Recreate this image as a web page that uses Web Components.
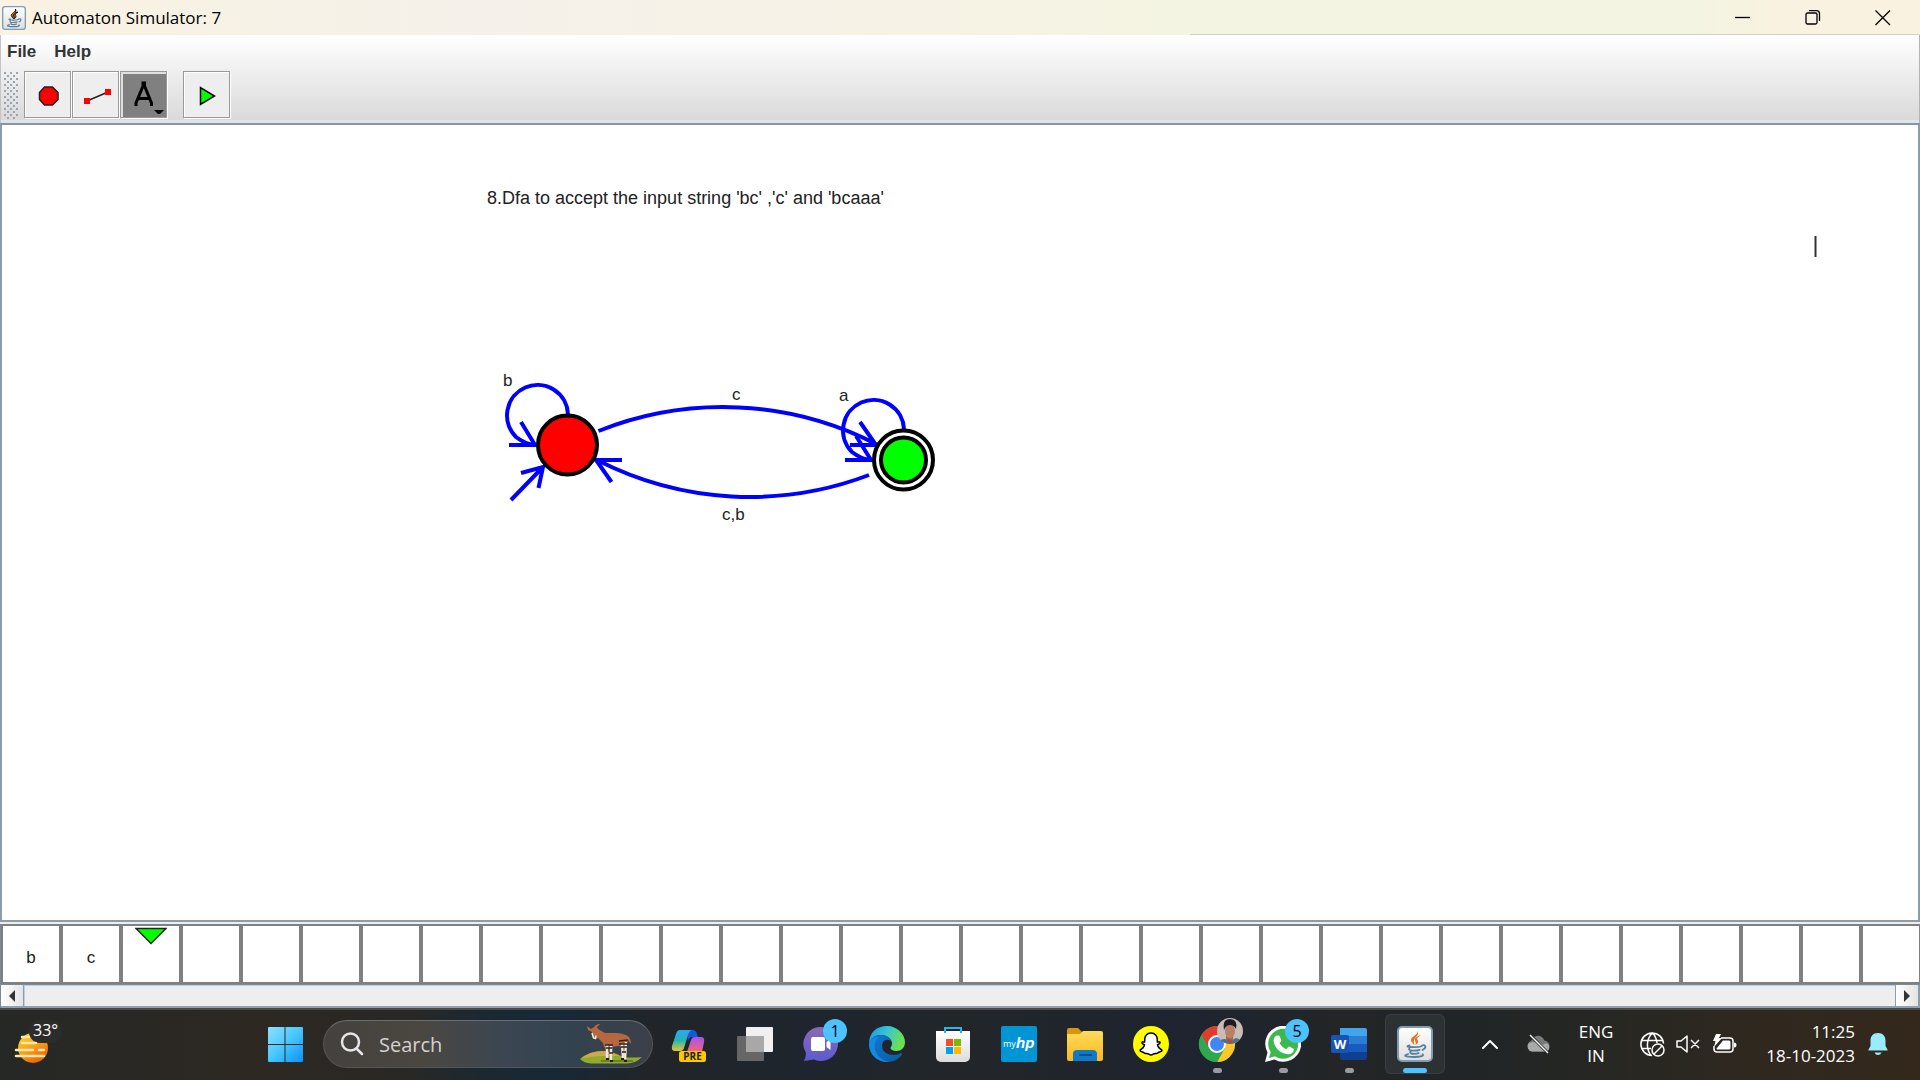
<!DOCTYPE html>
<html lang="en">
<head>
<meta charset="utf-8">
<title>Automaton Simulator: 7</title>
<style>
  html, body { margin: 0; height: 100%; overflow: hidden; background: #eee; }
  body { font-family: "Open Sans", "Noto Sans", sans-serif; }
</style>
</head>
<body>
<desk-screen>
  <app-window>
    <title-bar slot="title">Automaton Simulator: 7</title-bar>
    <menu-bar slot="chrome"></menu-bar>
    <tool-bar slot="chrome"></tool-bar>
    <automaton-canvas slot="canvas"></automaton-canvas>
    <input-tape slot="tape" symbols="b,c" head="2" cells="33"></input-tape>
    <tape-scroll slot="tape"></tape-scroll>
  </app-window>
  <task-bar slot="taskbar"></task-bar>
</desk-screen>

<template id="java-cup">
  <svg viewBox="0 0 36 36" width="100%" height="100%">
    <defs>
      <linearGradient id="tile" x1="0" y1="0" x2="0" y2="1"><stop offset="0" stop-color="#fff"/><stop offset="1" stop-color="#dedede"/></linearGradient>
    </defs>
    <rect x="1" y="1" width="34" height="34" rx="4" fill="url(#tile)" stroke="#7f9db5" stroke-width="2"/>
    <path d="M20 4.500c2.500 4-7 6.500-6 10 .4 1.800 2 3 3.200 4.500.3-2-1-3.200-.2-5C18 11 23 9 20 4.500z" fill="#e76f1c"/>
    <path d="M24 9c-4 1-7 3.500-6 5.700.6 1.300 1.500 2 .3 4.300 3.500-2 3-3.800 2-5.300-.9-1.500 1.200-3.200 3.700-4.700z" fill="#e76f1c"/>
    <g fill="none" stroke="#54819f" stroke-width="1.800" stroke-linecap="round">
      <path d="M12.500 19.300c-4 1-2 2 5 1.900 3.500 0 6-.5 7-1"/>
      <path d="M12.500 22.300c-1.500 2 1.500 2.500 5 2.400 2.500 0 4-.4 5-.8"/>
      <path d="M13.500 25.800c-1 1.500 1 2 4 2 2 0 3.300-.3 4.200-.8"/>
      <path d="M25 19.500c4-1.500 4.800 2.500.5 4.500"/>
      <path d="M11 28c-5 1.500-3.500 3 6 3 7 0 10.500-1.300 8.500-2.700"/>
    </g>
  </svg>
</template>

<script>
  const javaCup = () => document.getElementById('java-cup').innerHTML;

  class Part extends HTMLElement {
    connectedCallback() {
      if (this.shadowRoot) return;
      this.attachShadow({ mode: 'open' }).innerHTML =
        `<style>:host,*{box-sizing:border-box}button{appearance:none;border:0;padding:0;margin:0;background:none;color:inherit;font:inherit}svg{display:block}${this.css()}</style>${this.html()}`;
    }
    css() { return ''; }
    html() { return '<slot></slot>'; }
  }

  customElements.define('desk-screen', class extends Part {
    css() { return ':host{display:flex;flex-direction:column;height:100vh}.app{flex:1;min-height:0;display:flex}'; }
    html() { return '<div class="app"><slot></slot></div><slot name="taskbar"></slot>'; }
  });

  customElements.define('app-window', class extends Part {
    css() { return `
      :host{display:flex;flex-direction:column;flex:1;min-width:0}
      .chrome{background:linear-gradient(#fff,#dadada 84px,#dadada 85px,#e4e4e4 85px);border-left:1px solid #c4c4c4;border-right:1px solid #b4b4b4;height:88px}
      .view{flex:1;min-height:0;display:flex;border:2px solid #8c9cac;border-top-color:#8296aa;margin-bottom:2px;background:#fff}
      .tape{border-left:1px solid #7c8894;overflow:hidden}`; }
    html() { return `<slot name="title"></slot>
      <div class="chrome"><slot name="chrome"></slot></div>
      <div class="view"><slot name="canvas"></slot></div>
      <div class="tape"><slot name="tape"></slot></div>`; }
  });

  customElements.define('title-bar', class extends Part {
    css() { return `
      :host{display:flex;align-items:center;height:35px;background:linear-gradient(90deg,#d0d0c4,#d0d0c4) 100% 100%/38% 1px no-repeat,linear-gradient(90deg,#faf2e2 0,#f7f2e4 8%,#f5f1ea 25%,#f7f2e6 45%,#f4f4e2 62%,#f3f4e2 88%,#faf2e0 93%);color:#000;font-size:17px}
      .icon{width:24px;height:24px;margin:0 6px 0 2px}
      .name{flex:1;line-height:34px}
      .controls{display:flex;padding-right:2px}
      .controls button{width:70px;height:34px;display:grid;place-items:center}
      svg{fill:none;stroke:#000;stroke-width:1.300}`; }
    html() { return `<span class="icon">${javaCup()}</span><span class="name"><slot></slot></span>
      <span class="controls">
        <button aria-label="Minimize"><svg width="16" height="16"><path d="M0 7.500h15"/></svg></button>
        <button aria-label="Restore"><svg width="16" height="16"><rect x="1" y="3" width="11" height="11" rx="1.500"/><path d="M4 .7h7.500a3 3 0 0 1 3 3V11"/></svg></button>
        <button aria-label="Close"><svg width="16" height="16"><path d="M.5 .5l14.500 14.500M15 .5L.5 15"/></svg></button>
      </span>`; }
  });

  customElements.define('menu-bar', class extends Part {
    css() { return `
      :host{display:flex;gap:18px;padding:7px 6px 0;height:35px;font:bold 17px/20px "Liberation Sans",Arial,sans-serif;color:#333}
      button{height:20px}`; }
    html() { return '<button>File</button><button>Help</button>'; }
  });

  customElements.define('tool-bar', class extends Part {
    css() { return `
      :host{display:flex;align-items:flex-start;gap:1px;padding:1px 2px 0}
      .grip{width:16px;height:48px;margin-right:4px;background:radial-gradient(circle at 2px 2px,#9aa4ae 1px,transparent 1.500px) 0 0/6px 6px,radial-gradient(circle at 5px 5px,#9aa4ae 1px,transparent 1.500px) 0 0/6px 6px}
      button{width:47px;height:47px;border:1px solid #999;box-shadow:inset 1px 1px #fff,1px 1px #fff;background:#eee;display:grid;place-items:center}
      button.on{background:#808080;border:1px solid #999;box-shadow:inset 2px 2px #e0e0e0,1px 1px #fff}
      button.run{margin-left:15px}`; }
    html() { return `<span class="grip"></span>
      <button aria-label="State"><svg width="45" height="45"><path d="M19.500 15h8l5.500 5.500v7l-5.500 5.500h-8l-5-5.500v-7z" fill="#f00" stroke="#222" stroke-width="1.500"/></svg></button>
      <button aria-label="Transition"><svg width="45" height="45"><path d="M14 29l21-9" stroke="#222" stroke-width="1.500"/><path d="M11 26h6v6h-6zM32 17h6v6h-6z" fill="#f00"/></svg></button>
      <button class="on" aria-label="Label" aria-pressed="true"><svg width="45" height="45" fill="none"><path d="M15 34v-3l7-17v-3h1.500v3l7 17v3M18 26.500h10" stroke="#000" stroke-width="3"/><path d="M33 38h10l-4 4h-2z" fill="#000"/></svg></button>
      <button class="run" aria-label="Run"><svg width="45" height="45"><path d="M16.500 15.500v17l14-8.500z" fill="#0f0" stroke="#000" stroke-width="1.500"/></svg></button>`; }
  });

  customElements.define('automaton-canvas', class extends Part {
    css() { return `
      :host{display:block;flex:1;background:#fff;font:17px "Liberation Sans",Arial,sans-serif;overflow:hidden}
      .edges{fill:none;stroke:#00f;stroke-width:4}
      .states{stroke:#000;stroke-width:4}
      text{fill:#222}.title{font-size:18px}`; }
    html() { return `<svg width="100%" height="100%"><g transform="translate(-2 -125)">
      <g class="edges">
        <path d="M568 414A30.500 30.500 0 1 0 516 437Q525 444 535 445M509 445h26l-14-23"/>
        <path d="M904 429A30.500 30.500 0 1 0 852 452Q861 459 870 460M845 460h26l-15-24"/>
        <path d="M598.500 431A335 335 0 0 1 876 444M850 445h26l-16-23"/>
        <path d="M869 475A335 335 0 0 1 597 460M622 460h-26l15.500 22"/>
        <path d="M511 500l32-33M521 473l22-6-4.500 21"/>
      </g>
      <g class="states">
        <circle cx="567.500" cy="445" r="29.500" fill="#f00"/>
        <circle cx="903.500" cy="460" r="29.500" fill="#fff"/>
        <circle cx="903.500" cy="460" r="22.500" fill="#0f0"/>
      </g>
      <text class="title" x="487" y="204">8.Dfa to accept the input string 'bc' ,'c' and 'bcaaa'</text>
      <text x="503" y="386">b</text><text x="732" y="400">c</text>
      <text x="839" y="401">a</text><text x="722" y="520">c,b</text>
      <path d="M1815.500 236v21" stroke="#333" stroke-width="2"/>
    </g></svg>`; }
  });

  customElements.define('input-tape', class extends Part {
    css() { return `
      :host{display:flex;height:60px;overflow:hidden;background:#fff;font:17px/20px "Liberation Sans",Arial,sans-serif;color:#222}
      .cell{flex:none;width:60px;height:60px;border:2px solid #808080;display:flex;justify-content:center;padding-top:22px}
      .cell.head{padding-top:1px}`; }
    html() {
      const s = this.getAttribute('symbols').split(','), head = +this.getAttribute('head');
      return Array.from({ length: +this.getAttribute('cells') }, (_, i) => i === head
        ? '<span class="cell head"><svg width="32" height="18"><path d="M1 1.500h30L16 16.500z" fill="#0f0" stroke="#222" stroke-width="1.500"/></svg></span>'
        : `<span class="cell">${s[i] || ''}</span>`).join('');
    }
  });

  customElements.define('tape-scroll', class extends Part {
    css() { return `
      :host{display:flex;height:24px;border-top:1px solid #7a8a99;border-bottom:2px solid #8fa0b2}
      button{width:23px;background:linear-gradient(90deg,#fff,#e4e4e4);border-right:1px solid #8c9cac;display:grid;place-items:center}
      .next{border-left:1px solid #8c9cac;width:25px;border-right:2px solid #8c9cac}
      .track{flex:1;background:#eee;border-top:1px solid #b8cfe5;border-left:1px solid #b8cfe5}`; }
    html() { return `<button aria-label="Scroll left"><svg width="8" height="12"><path d="M7 0v12L1 6z" fill="#333"/></svg></button>
      <span class="track"></span>
      <button class="next" aria-label="Scroll right"><svg width="8" height="12"><path d="M1 0v12l6-6z" fill="#333"/></svg></button>`; }
  });

  customElements.define('task-item', class extends Part {
    css() { return `
      :host{display:block;flex:none}
      button{position:relative;width:60px;height:60px;display:grid;place-items:center;border-radius:6px}
      :host([active]) button{background:#2e3133;box-shadow:inset 0 0 0 1px #3b3d3f}
      .pic{width:36px;height:36px}
      .badge{position:absolute;left:32px;top:5px;width:24px;height:24px;border-radius:50%;background:#4cc2ff;color:#000;font-size:16px;line-height:24px;text-align:center}
      .mark{position:absolute;left:26px;bottom:1px;width:9px;height:5px;border-radius:3px;background:#9a9b9c}
      :host([active]) .mark{left:18px;width:24px;background:#4cc2ff}`; }
    html() {
      const b = this.getAttribute('badge');
      return `<button aria-label="${this.getAttribute('name')}"><span class="pic"><slot></slot></span>${b ? `<span class="badge">${b}</span>` : ''}${this.hasAttribute('running') ? '<span class="mark"></span>' : ''}</button>`;
    }
  });

  customElements.define('search-box', class extends Part {
    css() { return `
      :host{display:flex;flex:none;align-items:center;width:330px;height:48px;margin-left:2px;border:1px solid #55565a;border-top-color:#6a6d72;border-radius:24px;overflow:hidden;background:linear-gradient(90deg,#45423d,#4a4741 30%,#3b4652 55%,#33424f 75%,#3b4048)}
      svg{flex:none}.lens{margin-left:16px}
      input{flex:1;min-width:0;margin:0 0 0 15px;padding:0;border:0;outline:0;background:none;color:#d8d8d6;font:20px "Open Sans","Noto Sans",sans-serif}
      input::placeholder{color:#d3d2cf;opacity:1}
      .okapi{margin-right:9px}`; }
    html() { return `<svg class="lens" width="24" height="24" fill="none" stroke="#e4e6ea" stroke-width="2.500" stroke-linecap="round"><circle cx="10.500" cy="10" r="8.500"/><path d="M16.500 16.500l5.500 5.500"/></svg>
      <input type="search" aria-label="Search" placeholder="Search">
      <svg class="okapi" width="64" height="40">
        <path d="M1 35Q10 27 24 27Q36 28 44 33Q54 34 63 33Q57 39 48 39.500H12Q5 39 1 35z" fill="#93ab2c"/>
        <path d="M3 34Q12 27 24 27Q34 28 40 32Q22 31 3 34z" fill="#d0a84c"/>
        <path d="M22 37h32" stroke="#5c7a20" stroke-width="1.500"/>
        <path d="M12 5L8 2l1 4 4 2 1 5 2 2 3-1 5 5 1 4q3 2 6 0l9-1 6 2 2-4 1-4 3 4q0-7-5-9-5-2-10-2H26l-7-4-1-2 4-4-5 2-2 2z" fill="#b5683f"/>
        <path d="M13 9l1.500 5 2 .5.500-3" fill="none" stroke="#f2eee8" stroke-width="1.500"/>
        <path d="M28 21v13M32 22v14M43 20l1 14M47 18l-1 17" stroke="#eee5dc" stroke-width="2.500"/>
        <path d="M26 21h8M27 24h6M40 17l9-1M40 20h9M42 23h6M30 29h4M43 28h4" stroke="#30211d" stroke-width="1.500"/>
        <path d="M27 35h3M31 37h3M42 35h3M45 37h3" stroke="#271a18" stroke-width="2"/>
      </svg>`; }
  });

  customElements.define('task-bar', class extends Part {
    css() { return `
      :host{display:flex;flex:none;align-items:center;height:72px;padding-bottom:2px;border-top:2px solid #4a4a47;color:#fff;background:linear-gradient(90deg,#262825 0,#2d2822 13%,#2a2824 21%,#1c2831 25%,#172836 29%,#212529 34%,#1e252e 42%,#222629 50%,#1e2430 62%,#232526 70%,#212527 76%,#262723 83%,#30281f 92%,#33281b 100%)}
      .weather{flex:0 0 240px;padding-left:14px}
      .apps{display:flex;flex:1;align-items:center;gap:6px;padding-left:15px}
      .tray{display:flex;align-items:center;font-size:17px;line-height:24px}
      .tray button{display:block}
      .tray .lang{text-align:center;width:44px;margin:0 22px 0 24px}
      .tray .clock{text-align:right;margin:0 13px 0 16px;width:102px;white-space:nowrap}
      .tray .bell{margin-right:32px}
      .cloud{margin-left:28px}.sound{margin-left:11px}.power{margin-left:12px}
      .tray svg{flex:none}`; }
    html() { return `
      <button class="weather" aria-label="Weather"><svg width="52" height="56" viewBox="0 -6 52 56">
        <defs><linearGradient id="sun" x1="0" y1="0" x2=".6" y2="1"><stop offset="0" stop-color="#ffdc26"/><stop offset=".6" stop-color="#f79a1c"/><stop offset="1" stop-color="#e8650c"/></linearGradient></defs>
        <circle cx="19" cy="26" r="15" fill="url(#sun)"/><rect x="15" y="-2" width="33" height="23" rx="11" fill="#2c2c2a"/>
        <path d="M8 15h7M8 21h14M2 28h17M25 28h5M2 34h28" stroke="#ffe8a8" stroke-width="2.500" stroke-linecap="round"/>
        <text x="19" y="14" fill="#fff" font-size="16" font-family="Open Sans, sans-serif">33°</text></svg></button>
      <div class="apps">
        <task-item name="Start"><svg width="36" height="36"><defs><linearGradient id="w" x1="0" y1="0" x2="1" y2="1"><stop offset="0" stop-color="#8ee0ff"/><stop offset=".5" stop-color="#46c7ff"/><stop offset="1" stop-color="#0a92fa"/></linearGradient></defs><path d="M2 1h15.500v17H1V2a1 1 0 0 1 1-1zM18.500 1H35a1 1 0 0 1 1 1v16H18.500zM1 19h16.500v17H2a1 1 0 0 1-1-1zM18.500 19H36v16a1 1 0 0 1-1 1H18.500z" fill="url(#w)"/></svg></task-item>
        <search-box></search-box>
        <task-item name="Copilot"><svg width="36" height="36">
          <defs><linearGradient id="ca" x1="0" y1="0" x2="0" y2="1"><stop offset="0" stop-color="#2aa8f4"/><stop offset=".5" stop-color="#25b4b4"/><stop offset="1" stop-color="#ecc52c"/></linearGradient>
          <linearGradient id="cb" x1="0" y1="0" x2="0" y2="1"><stop offset="0" stop-color="#a454ee"/><stop offset="1" stop-color="#f8637c"/></linearGradient></defs>
          <path d="M16 4h6q3 0 4 4l1 3h-6q-3 0-4 4z" fill="#1458dc"/>
          <path d="M9 4h12q-3 1-4 5l-4 13q-1 3-4 3H4q-4 0-3-5L5 8q1-4 4-4z" fill="url(#ca)"/>
          <path d="M23 11h7q4 0 3 5l-2 10H16l4-12q1-3 3-3z" fill="url(#cb)"/>
          <rect x="8" y="25" width="27" height="11" rx="2.500" fill="#ffc800"/><text x="21.500" y="34" text-anchor="middle" font-size="10" font-weight="bold" font-family="Open Sans, sans-serif" fill="#221">PRE</text></svg></task-item>
        <task-item name="Task view"><svg width="36" height="36"><rect x="9" y="1" width="27" height="25" rx="1" fill="#f0f0f0"/><rect x="0" y="10" width="27" height="25" rx="1" fill="#666"/><path d="M9 10h18v16H9z" fill="#a8a8a8"/></svg></task-item>
        <task-item name="Chat" badge="1"><svg width="36" height="36"><defs><linearGradient id="ch" x1="0" y1="0" x2="0" y2="1"><stop offset="0" stop-color="#8d68b4"/><stop offset="1" stop-color="#5b5bd0"/></linearGradient></defs><path d="M18 1a17 17 0 1 1-7 32.500L1 35q2-4 2-8A17 17 0 0 1 18 1z" fill="url(#ch)"/><rect x="8" y="11" width="14" height="14" rx="2" fill="#fff"/><path d="M23.500 16l4-3v11l-4-3z" fill="#fff"/></svg></task-item>
        <task-item name="Edge"><svg width="36" height="36">
          <defs><linearGradient id="ea" x1="0" y1="0" x2="1" y2=".3"><stop offset="0" stop-color="#1d90dc"/><stop offset=".5" stop-color="#36c4d8"/><stop offset="1" stop-color="#6be04e"/></linearGradient>
          <linearGradient id="eb" x1="0" y1="0" x2="1" y2="1"><stop offset="0" stop-color="#0f7ad2"/><stop offset="1" stop-color="#0c59a4"/></linearGradient></defs>
          <path d="M0 18C0 6 8 0 18 0s18 8 18 16c0 6-4 9-8.500 9-4 0-6-1.500-6-3 0-1 1.500-1.500 1.500-4.500C23 13 18 9 12 9S1 13 0 18z" fill="url(#ea)"/>
          <path d="M0 18c1-6 6-9 12-9 5 0 9 3 10 6-5-3-9 0-9 5 0 6 6 9 12 9 3 0 5-1 7-2 1 0 1.500.500 1 1.500C30 33 25 36 18 36 8 36 0 28 0 18z" fill="url(#eb)"/>
          <path d="M0 18c1-5 5-7 10-7-5 4-6 11-2 17 3 5 8 7.500 13 8C8 37 0 28 0 18z" fill="#1489e0"/></svg></task-item>
        <task-item name="Store"><svg width="36" height="36"><defs><linearGradient id="st" x1="0" y1="0" x2="0" y2="1"><stop offset="0" stop-color="#fff"/><stop offset="1" stop-color="#dcdcdc"/></linearGradient></defs><path d="M1 5h34v26a5 5 0 0 1-5 5H6a5 5 0 0 1-5-5z" fill="url(#st)"/><path d="M10 7V2h16v5" fill="none" stroke="#2ab4e8" stroke-width="2"/><path d="M11 13h7v7h-7z" fill="#f05022"/><path d="M19 13h7v7h-7z" fill="#7db900"/><path d="M11 21h7v7h-7z" fill="#00a2ee"/><path d="M19 21h7v7h-7z" fill="#ffb800"/></svg></task-item>
        <task-item name="myHP"><svg width="36" height="36"><rect width="36" height="36" rx="2" fill="#0096d6"/><text x="2" y="21" fill="#fff" font-size="9" font-family="Open Sans, sans-serif">my</text><text x="15" y="22" fill="#fff" font-size="15" font-weight="bold" font-style="italic" font-family="Liberation Sans, sans-serif">hp</text></svg></task-item>
        <task-item name="File Explorer"><svg width="36" height="36"><defs><linearGradient id="fo" x1="0" y1="0" x2="0" y2="1"><stop offset="0" stop-color="#ffdb5c"/><stop offset="1" stop-color="#f9b91e"/></linearGradient></defs><path d="M0 4q0-2 2-2h9l4 4h20v6H0z" fill="#d8960c"/><path d="M0 8h13l3-3h18q2 0 2 2v26q0 2-2 2H2q-2 0-2-2z" fill="url(#fo)"/><path d="M6 35v-7q0-4 4-4h16q4 0 4 4v7z" fill="#0f7bc8"/><path d="M12 29h13" stroke="#0a5390" stroke-width="2"/></svg></task-item>
        <task-item name="Snapchat"><svg width="36" height="36"><circle cx="18" cy="18" r="18" fill="#fffc00"/><path d="M18 7c4 0 6.500 3 6.300 7v2c1 .3 2-.8 2.700.2.500 1-1 1.800-2.500 2.500.5 3 2.500 4.500 4.500 5.500 0 1.500-2 1.500-3.500 2-.5 1.500-1 1.400-3 1.200-2-.2-2.500 1.600-4.500 1.600s-2.500-1.800-4.500-1.600c-2 .2-2.500.3-3-1.200-1.500-.5-3.500-.5-3.500-2 2-1 4-2.500 4.500-5.500-1.500-.7-3-1.500-2.500-2.500.7-1 1.700.1 2.700-.2v-2C11.500 10 14 7 18 7z" fill="#fff" stroke="#000" stroke-width="1.500"/></svg></task-item>
        <task-item name="Chrome" running><svg width="36" height="36" overflow="visible"><circle cx="18" cy="18" r="18" fill="#2fa84f"/><path d="M18 18L2.500 9A18 18 0 0 1 33.600 9H18z" fill="#e33b2e"/><path d="M18 9h15.600A18 18 0 0 1 18 36l7.800-13.500z" fill="#fdc727"/><path d="M2.500 9L10.200 22.500 18 18l-4-9z" fill="#e33b2e"/><path d="M2.400 9L10 22.500q3 4.500 8 4.500h5L18 36A18 18 0 0 1 2.400 9z" fill="#2fa84f"/><circle cx="18" cy="18" r="9" fill="#fff"/><circle cx="18" cy="18" r="7" fill="#4285f4"/>
          <clipPath id="face"><circle cx="31" cy="5" r="13"/></clipPath><g clip-path="url(#face)"><path d="M18-8h26v26H18z" fill="#c8bcb6"/><path d="M18 18q2-5 8-5l5 2 6-3q5 1 7 6z" fill="#526e88"/><path d="M27 10h7v4l-3 3-4-3z" fill="#996850"/><ellipse cx="31" cy="5" rx="5" ry="7.500" fill="#b98066"/><path d="M25 4q-2-11 6-11t6 10q-2-4-6-4t-6 5z" fill="#1c1c22"/><path d="M28 13l3 6 2-5z" fill="#b8453d"/></g></svg></task-item>
        <task-item name="WhatsApp" badge="5" running><svg width="36" height="36"><path d="M0 36l2.500-9.500A18 18 0 1 1 9.500 33.500z" fill="#fff"/><path d="M4 32l1.700-6A15 15 0 1 1 10 30.300z" fill="#3cb94c"/><path d="M11.500 9.500h2q1 0 1.300 1l1.400 3.400q.3.700-.2 1.400l-1.500 1.900q2.500 4.300 6.700 6.100l2-2.300q.6-.8 1.500-.3l3.500 1.700q1 .5.700 1.500-1 4-5.500 4.300Q11 27 8.500 15q0-3.500 3-5.500z" fill="#fff"/></svg></task-item>
        <task-item name="Word" running><svg width="36" height="36"><path d="M9 2h25q2 0 2 2v6H9z" fill="#41a5ee"/><path d="M9 10h27v8H9z" fill="#2b7cd3"/><path d="M9 18h27v8H9z" fill="#185abd"/><path d="M9 26h27v6q0 2-2 2H11q-2 0-2-2z" fill="#103f91"/><rect x="0" y="9" width="18" height="18" rx="2" fill="#1853b5"/><text x="9" y="23" text-anchor="middle" font-size="13" font-weight="bold" font-family="Open Sans, sans-serif" fill="#fff">W</text></svg></task-item>
        <task-item name="Automaton Simulator" active running>${javaCup()}</task-item>
      </div>
      <div class="tray">
        <button aria-label="Hidden icons"><svg width="16" height="10" fill="none" stroke="#fff" stroke-width="2" stroke-linecap="round" stroke-linejoin="round"><path d="M1 9l7-7 7 7"/></svg></button>
        <svg class="cloud" width="24" height="20"><path d="M6 17.500a5.500 5.500 0 0 1-1-10.500C8 0 16 0 18.500 6.500c6 1 7 9 1.500 11z" fill="#77797a"/><path d="M6 17.500a5 5 0 0 1-3-8.500q8-3 14 2 6-4 6 3 0 3-3 3.500z" fill="#a8aaaa"/><path d="M4 1l18 18" stroke="#222" stroke-width="3"/><path d="M4 1l18 18" stroke="#fff" stroke-width="1.500"/></svg>
        <button class="lang">ENG<br>IN</button>
        <svg width="25" height="25" fill="none" stroke="#fff" stroke-width="1.500"><path d="M12 23.500a11.300 11.300 0 1 1 11.500-12M2 8.500h21M2 16.500h9M11 23.500C6 17 6 7 12.500 1c2.500 2.500 4 6 4.500 10M8 23"/><circle cx="18" cy="18" r="6"/><path d="M14 22l8-8"/></svg>
        <svg class="sound" width="24" height="20" fill="none" stroke="#fff" stroke-width="1.500" stroke-linejoin="round"><path d="M1 7h4l6-5v16l-6-5H1zM15 6l8 8M23 6l-8 8"/></svg>
        <svg class="power" width="25" height="20"><path d="M9 4h9q3 0 3 3v8q0 3-3 3H5q-3 0-3-3v-3" fill="none" stroke="#fff" stroke-width="1.500"/><path d="M11 6.500h6q1.500 0 1.500 1.500v6q0 1.500-1.500 1.500H5.500q-1 0-1-1L9 9z" fill="#fff"/><path d="M22 8.500q2.500 0 2.500 2.500T22 13.500zM4 0h5L7 4h3L2 13l1.500-6H1z" fill="#fff"/></svg>
        <button class="clock">11:25<br>18-10-2023</button>
        <button class="bell" aria-label="Notifications"><svg width="20" height="24"><path d="M10 1c5 0 7.500 3.500 7.500 7.500V14l2 3.500v1H.5v-1l2-3.500V8.500C2.500 4.500 5 1 10 1zM6.500 20.500h7q-1 2.500-3.500 2.500t-3.500-2.500z" fill="#98ecfe"/></svg></button>
      </div>`; }
  });
</script>
</body>
</html>
